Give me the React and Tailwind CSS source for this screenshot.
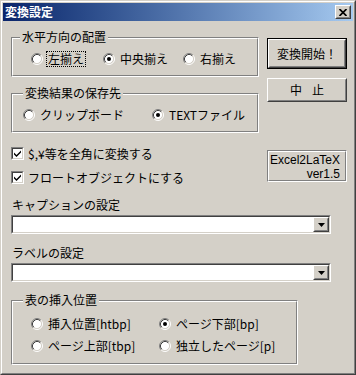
import React from 'react';

function Raised({ className = '', innerClassName = '', children }) {
  return (
    <div className={`border border-t-white border-l-white border-r-[#404040] border-b-[#404040] ${className}`}>
      <div className={`h-full border border-t-[#d4d0c8] border-l-[#d4d0c8] border-r-[#808080] border-b-[#808080] ${innerClassName}`}>
        {children}
      </div>
    </div>
  );
}

function Sunken({ className = '', innerClassName = '', children }) {
  return (
    <div className={`border border-t-[#808080] border-l-[#808080] border-r-white border-b-white ${className}`}>
      <div className={`h-full border border-t-[#404040] border-l-[#404040] border-r-[#d4d0c8] border-b-[#d4d0c8] ${innerClassName}`}>
        {children}
      </div>
    </div>
  );
}

function Group({ label, labelLeft = 'left-[11px]', className = '', innerClassName = '', children }) {
  return (
    <div className={`relative border border-t-[#808080] border-l-[#808080] border-r-white border-b-white ${className}`}>
      <div className={`h-full border border-t-white border-l-white border-r-[#808080] border-b-[#808080] ${innerClassName}`}>
        {children}
      </div>
      {label && (
        <span className={`absolute -top-[8px] ${labelLeft} bg-[#d4d0c8] px-[2px] leading-[14px] whitespace-nowrap`}>
          {label}
        </span>
      )}
    </div>
  );
}

function Radio({ checked }) {
  return (
    <svg width="12" height="12" viewBox="0 0 12 12" className="shrink-0">
      <circle cx="6" cy="6" r="4.5" fill="#fff" />
      <path d="M2.11 9.89A5.5 5.5 0 0 1 9.89 2.11" fill="none" stroke="#808080" />
      <path d="M9.89 2.11A5.5 5.5 0 0 1 2.11 9.89" fill="none" stroke="#fff" />
      <path d="M2.82 9.18A4.5 4.5 0 0 1 9.18 2.82" fill="none" stroke="#404040" />
      <path d="M9.18 2.82A4.5 4.5 0 0 1 2.82 9.18" fill="none" stroke="#d4d0c8" />
      {checked && <circle cx="6" cy="6" r="2" fill="#000" />}
    </svg>
  );
}

function RadioItem({ label, checked, focused, className = '' }) {
  return (
    <div className={`flex items-center h-[16px] ${className}`}>
      <Radio checked={checked} />
      <span
        className={`ml-[3px] px-[1px] leading-[14px] whitespace-nowrap border ${
          focused ? 'border-dotted border-black' : 'border-transparent'
        }`}
      >
        {label}
      </span>
    </div>
  );
}

function CheckItem({ label, className = '' }) {
  return (
    <div className={`flex items-center h-[13px] ${className}`}>
      <Sunken className="w-[13px] h-[13px] shrink-0" innerClassName="bg-white flex items-center justify-center">
        <svg width="9" height="9" viewBox="0 0 9 9">
          <path d="M1 3.5 L3.5 6 L8 1.5 L8 3.5 L3.5 8 L1 5.5 Z" fill="#000" />
        </svg>
      </Sunken>
      <span className="ml-[4px] leading-[14px] whitespace-nowrap">{label}</span>
    </div>
  );
}

function Combo({ className = '' }) {
  return (
    <Sunken className={`w-[320px] h-[19px] ${className}`} innerClassName="bg-white flex justify-end">
      <Raised className="w-[16px] h-[15px]" innerClassName="flex items-center justify-center bg-[#d4d0c8]">
        <svg width="7" height="4" viewBox="0 0 7 4">
          <path d="M0 0 H7 L3.5 4 Z" fill="#000" />
        </svg>
      </Raised>
    </Sunken>
  );
}

export default function App() {
  return (
    <div className="w-[356px] h-[375px] bg-[#d4d0c8] text-[12px] text-black font-['Noto_Sans_CJK_JP','Liberation_Sans',sans-serif] border border-t-[#d4d0c8] border-l-[#d4d0c8] border-r-[#404040] border-b-[#404040]">
      <div className="h-full border border-t-white border-l-white border-r-[#808080] border-b-[#808080] p-[1px]">
        <div className="h-[18px] flex items-center justify-between bg-linear-to-r from-[#0a246a] to-[#a6caf0] pl-[2px] pr-[2px]">
          <span className="text-white font-bold leading-[14px]">変換設定</span>
          <Raised className="w-[16px] h-[14px]" innerClassName="flex items-center justify-center bg-[#d4d0c8]">
            <svg width="8" height="7" viewBox="0 0 8 7">
              <path d="M0.5 0 L7.5 7 M7.5 0 L0.5 7" stroke="#000" strokeWidth="1.7" />
            </svg>
          </Raised>
        </div>

        <div className="flex">
          <div className="ml-[8px] w-[248px]">
            <Group label="水平方向の配置" labelLeft="left-[8px]" className="mt-[16px] h-[40px]" innerClassName="flex pt-[12px] pl-[18px]">
              <RadioItem label="左揃え" focused className="w-[72px]" />
              <RadioItem label="中央揃え" checked className="w-[80px]" />
              <RadioItem label="右揃え" />
            </Group>
            <Group label="変換結果の保存先" className="mt-[16px] h-[40px]" innerClassName="flex pt-[12px] pl-[10px]">
              <RadioItem label="クリップボード" className="w-[129px]" />
              <RadioItem label="TEXTファイル" checked />
            </Group>
            <CheckItem label="$,¥等を全角に変換する" className="mt-[14px]" />
            <CheckItem label="フロートオブジェクトにする" className="mt-[11px]" />
          </div>

          <div className="ml-[8px] w-[80px]">
            <div className="mt-[17px] h-[31px] border border-black">
              <Raised className="h-full" innerClassName="flex items-center justify-center leading-[14px]">
                変換開始！
              </Raised>
            </div>
            <Raised className="mt-[9px] h-[24px]" innerClassName="flex items-center justify-center gap-[10px] leading-[14px]">
              <span>中</span>
              <span>止</span>
            </Raised>
            <Group
              className="mt-[48px] h-[32px]"
              innerClassName="flex flex-col items-end pt-[1px] pr-[5px] text-[12px] leading-[14px] font-['Liberation_Sans',sans-serif]"
            >
              <span>Excel2LaTeX</span>
              <span>ver1.5</span>
            </Group>
          </div>
        </div>

        <div className="ml-[8px]">
          <div className="mt-[14px] pl-[1px] leading-[14px]">キャプションの設定</div>
          <Combo className="mt-[3px]" />
          <div className="mt-[12px] pl-[1px] leading-[14px]">ラベルの設定</div>
          <Combo className="mt-[3px]" />
          <Group label="表の挿入位置" className="mt-[18px] w-[287px] h-[65px]" innerClassName="flex flex-col gap-[6px] pt-[14px] pl-[18px]">
            <div className="flex">
              <RadioItem label="挿入位置[htbp]" className="w-[128px]" />
              <RadioItem label="ページ下部[bp]" checked />
            </div>
            <div className="flex">
              <RadioItem label="ページ上部[tbp]" className="w-[128px]" />
              <RadioItem label="独立したページ[p]" />
            </div>
          </Group>
        </div>
      </div>
    </div>
  );
}
